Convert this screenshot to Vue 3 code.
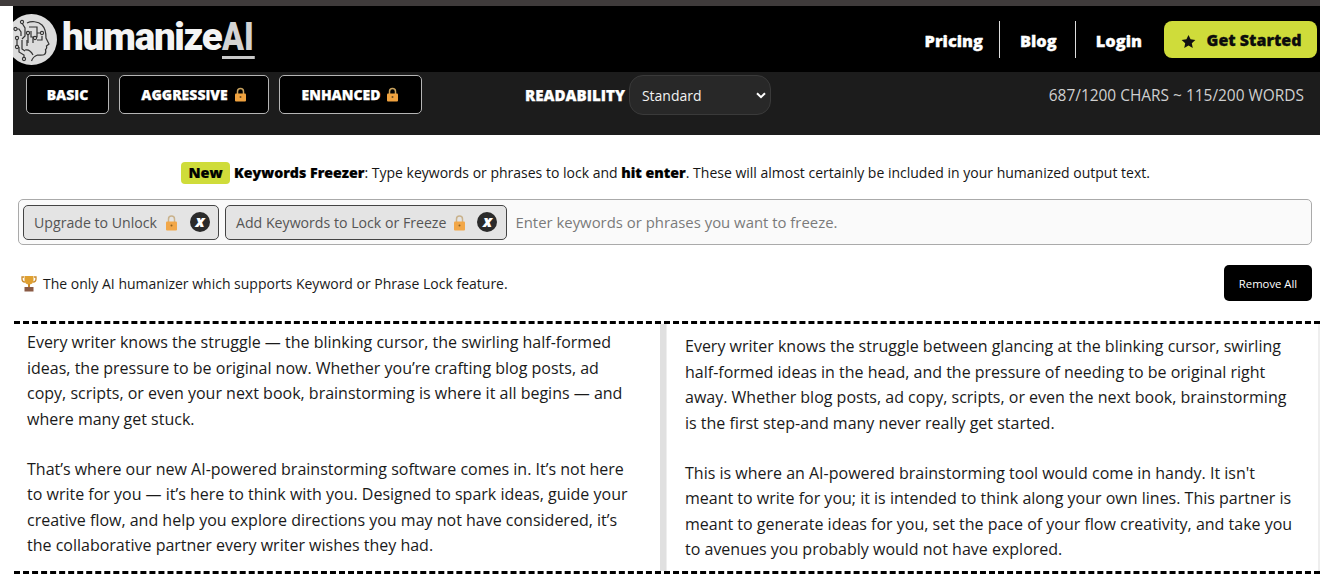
<template>
  <div class="page">
    <div class="topline"></div>
    <div class="shell">
      <header class="nav">
        <div class="brand">
          <svg class="logo" width="44" height="52" viewBox="0 0 44 52">
            <circle cx="18.500" cy="25.500" r="25.500" fill="#dcdcdc" />
            <g fill="none" stroke="#333" stroke-width="1.200">
              <path d="M14 9c4-2 11-2 15 2 4 4 4 9 4 13l3 6-2.500 2c.5 2 0 3-1 3.500.5 2 .5 4-1 5-2 1-5 .5-7 .5-3 1-5 3-6 6" />
              <path d="M12 36c4-1 6 1 8 5" />
              <path d="M16 13h8v6h5M18 17v6h6v-5M20 23v6M24 26h5v-4M15 19v10" />
              <path d="M9 9l3 5v8l-3 3M2 15h4l2 3v4M4 24v9M9 26v9l3 2M6 33v5l5 3v3M14 26v6" />
            </g>
            <g fill="#dcdcdc" stroke="#333" stroke-width="1.100">
              <circle cx="9" cy="8" r="1.600" /><circle cx="2.500" cy="15" r="1.600" /><circle cx="4" cy="24" r="1.600" />
              <circle cx="4" cy="33" r="1.600" /><circle cx="11" cy="45" r="1.600" /><circle cx="29" cy="19" r="1.600" />
              <circle cx="22" cy="24" r="1.600" /><circle cx="15" cy="19" r="1.600" />
            </g>
          </svg>
          <span class="wordmark">humanize<span class="ai">AI</span></span>
        </div>
        <nav class="links">
          <a class="link">Pricing</a>
          <a class="link sep blog">Blog</a>
          <a class="link sep">Login</a>
          <button class="cta">
            <svg width="15" height="15" viewBox="0 0 24 24"><path d="M12 1.500l3.300 7 7.700.9-5.700 5.200 1.500 7.600L12 18.400l-6.800 3.800 1.500-7.600L1 9.400l7.700-.9z" fill="#111" /></svg>
            <span>Get Started</span>
          </button>
        </nav>
      </header>
      <div class="toolbar">
        <div class="modes">
          <button v-for="m in modes" :key="m.label" class="mode" :style="{ width: m.w + 'px' }">
            {{ m.label }}
            <svg v-if="m.lock" class="lock" width="13" height="15" viewBox="0 0 13 15">
              <path d="M3.500 7V4.500a3 3 0 0 1 6 0V7" fill="none" stroke="#c9a25e" stroke-width="1.500" />
              <rect x="1" y="6.500" width="11" height="8" rx="1" fill="#f0a23f" />
              <circle cx="6.500" cy="10" r="1" fill="#6b4a1e" />
            </svg>
          </button>
        </div>
        <div class="readability">
          <span class="rlabel">READABILITY</span>
          <div class="select">
            <span>Standard</span>
            <svg width="10" height="7" viewBox="0 0 10 7"><path d="M1 1.200l4 4 4-4" fill="none" stroke="#fff" stroke-width="2" /></svg>
          </div>
        </div>
        <div class="counts">687/1200 CHARS ~ 115/200 WORDS</div>
      </div>
    </div>

    <p class="notice">
      <span class="new">New</span>
      <strong>Keywords Freezer</strong>: Type keywords or phrases to lock and <strong>hit enter</strong>. These will almost certainly be included in your humanized output text.
    </p>

    <div class="tagbox">
      <div v-for="t in tags" :key="t" class="tag">
        <span>{{ t }}</span>
        <svg class="lock2" width="13" height="17" viewBox="0 0 13 17">
          <path d="M3.500 8V5a3 3 0 0 1 6 0v3" fill="none" stroke="#c9b28c" stroke-width="1.500" />
          <rect x="1" y="7.500" width="11" height="9" rx="1" fill="#f2a748" />
          <circle cx="6.500" cy="11.500" r="1" fill="#8b6226" />
        </svg>
        <span class="close">x</span>
      </div>
      <span class="placeholder">Enter keywords or phrases you want to freeze.</span>
    </div>

    <div class="feature">
      <div class="feature-text">
        <svg width="16" height="17" viewBox="0 0 16 17">
          <path d="M3 2H1v2c0 2 1.500 3 3 3M13 2h2v2c0 2-1.500 3-3 3" fill="none" stroke="#c98a2c" stroke-width="1.300" />
          <path d="M3.500 1h9v4c0 3-2 4.500-4.500 4.500S3.500 8 3.500 5z" fill="#e0a030" />
          <rect x="7" y="9" width="2" height="3" fill="#c98a2c" />
          <rect x="3.500" y="12" width="9" height="4.500" fill="#8a5a44" />
        </svg>
        <span>The only AI humanizer which supports Keyword or Phrase Lock feature.</span>
      </div>
      <button class="remove">Remove All</button>
    </div>

    <section class="editors">
      <div class="pane left">
        <p v-for="p in leftText" :key="p">{{ p }}</p>
      </div>
      <div class="splitter"></div>
      <div class="pane right">
        <p v-for="p in rightText" :key="p">{{ p }}</p>
      </div>
    </section>
  </div>
</template>

<script setup>
const modes = [
  { label: 'BASIC', lock: false, w: 83 },
  { label: 'AGGRESSIVE', lock: true, w: 150 },
  { label: 'ENHANCED', lock: true, w: 143 }
]
const tags = ['Upgrade to Unlock', 'Add Keywords to Lock or Freeze']
const leftText = [
  'Every writer knows the struggle — the blinking cursor, the swirling half-formed ideas, the pressure to be original now. Whether you’re crafting blog posts, ad copy, scripts, or even your next book, brainstorming is where it all begins — and where many get stuck.',
  'That’s where our new AI-powered brainstorming software comes in. It’s not here to write for you — it’s here to think with you. Designed to spark ideas, guide your creative flow, and help you explore directions you may not have considered, it’s the collaborative partner every writer wishes they had.'
]
const rightText = [
  'Every writer knows the struggle between glancing at the blinking cursor, swirling half-formed ideas in the head, and the pressure of needing to be original right away. Whether blog posts, ad copy, scripts, or even the next book, brainstorming is the first step-and many never really get started.',
  'This is where an AI-powered brainstorming tool would come in handy. It isn\'t meant to write for you; it is intended to think along your own lines. This partner is meant to generate ideas for you, set the pace of your flow creativity, and take you to avenues you probably would not have explored.'
]
</script>

<style>
html, body { margin: 0; background: #fff; overflow: hidden; }
</style>

<style scoped>
.page {
  width: 1320px;
  height: 586px;
  overflow: hidden;
  font-family: "Open Sans", "Noto Sans", sans-serif;
  color: #111;
  background: #fff;
}
.topline { height: 6px; background: #3f3b3b; }
.shell { margin-left: 13px; }
.nav {
  height: 66px;
  background: #000;
  display: flex;
  justify-content: space-between;
  align-items: flex-start;
}
.brand { display: flex; align-items: flex-start; height: 66px; padding-top: 8px; box-sizing: border-box; }
.logo { display: block; flex: none; }
.wordmark {
  font-family: Roboto, sans-serif;
  font-weight: 900;
  font-size: 38.500px;
  letter-spacing: -1.300px;
  color: #f4f4f4;
  margin-left: 5px;
  line-height: 46px;
  white-space: nowrap;
}
.ai {
  color: #d4d4d4;
  border-bottom: 3px solid #c9c9c9;
  display: inline-block;
  line-height: 38px;
  letter-spacing: 0;
  padding-right: 1px;
  transform: scaleX(0.84);
  transform-origin: left;
}
.links { display: flex; align-items: center; padding: 15px 3px 0 0; }
.link {
  color: #fff;
  font-weight: 800;
  font-size: 16.400px;
  line-height: 40px;
  height: 37px;
  -webkit-text-stroke: 0.3px #fff;
}
.link.sep { border-left: 1px solid #ddd; margin-left: 16px; padding-left: 20px; }
.link.blog { margin-right: 2px; }
.cta {
  margin-left: 22px;
  width: 153px;
  height: 37px;
  border: none;
  border-radius: 8px;
  background: #cfdc3a;
  display: flex;
  align-items: center;
  justify-content: center;
  gap: 11px;
  font-family: inherit;
  font-weight: 800;
  font-size: 16px;
  color: #0c0c0c;
  padding: 0 0 0 1px;
  -webkit-text-stroke: 0.3px #0c0c0c;
}
.cta svg { margin-top: 3px; }
.toolbar {
  height: 63px;
  box-sizing: border-box;
  background: #1c1c1c;
  display: flex;
  align-items: flex-start;
  padding: 3px 16px 0 13px;
}
.modes { display: flex; gap: 10px; }
.mode {
  height: 39px;
  border: 1px solid #b5b5b5;
  border-radius: 5px;
  background: #000;
  color: #fff;
  font-family: inherit;
  font-weight: 800;
  font-size: 14px;
  display: flex;
  align-items: center;
  justify-content: center;
  gap: 6px;
  padding: 0;
  -webkit-text-stroke: 0.25px #fff;
}
.readability { display: flex; align-items: center; margin-left: 103px; gap: 4px; height: 40px; }
.rlabel { color: #fff; font-weight: 800; font-size: 15.100px; -webkit-text-stroke: 0.25px #fff; }
.select {
  width: 142px;
  height: 40px;
  box-sizing: border-box;
  border: 1px solid #3a3a3a;
  border-radius: 14px;
  background: #282828;
  color: #f2f2f2;
  font-size: 14px;
  display: flex;
  align-items: center;
  justify-content: space-between;
  padding: 0 4px 0 12px;
}
.counts {
  margin-left: auto;
  color: #cfcfcf;
  font-size: 15.450px;
  line-height: 40px;
}
.notice {
  margin: 26px 0 0;
  height: 24px;
  font-size: 14px;
  line-height: 24px;
  text-align: center;
  padding-left: 11px;
  color: #151515;
}
.notice strong { font-weight: 800; color: #000; font-size: 14.200px; -webkit-text-stroke: 0.2px #000; }
.new {
  display: inline-block;
  background: #cfdc3a;
  border-radius: 4px;
  width: 49px;
  height: 22px;
  line-height: 22px;
  font-weight: 800;
  font-size: 14.500px;
  color: #000;
  margin-right: 4px;
  vertical-align: 0;
  -webkit-text-stroke: 0.2px #000;
}
.tagbox {
  margin: 14px 8px 0 18px;
  height: 46px;
  box-sizing: border-box;
  border: 1px solid #aaa;
  border-radius: 5px;
  background: #fafafa;
  display: flex;
  align-items: center;
  gap: 6px;
  padding-left: 4px;
}
.tag {
  height: 35px;
  box-sizing: border-box;
  border: 1px solid #444;
  border-radius: 5px;
  background: #e4e4e4;
  color: #555;
  font-size: 14.150px;
  display: flex;
  align-items: center;
  padding: 0 8px 0 10px;
}
.tag:first-child .lock2 { margin-left: 8px; }
.tag:nth-child(2) { padding-right: 9px; }
.tag:nth-child(2) .close { margin-left: 11px; }
.lock2 { margin-left: 7px; }
.close {
  width: 20px;
  height: 20px;
  border-radius: 50%;
  background: #2b2b2b;
  color: #fff;
  font-weight: 800;
  font-style: italic;
  font-size: 16px;
  line-height: 18px;
  text-align: center;
  margin-left: 12px;
}
.placeholder { color: #7a7a7a; font-size: 14.900px; margin-left: 2px; }
.feature {
  display: flex;
  justify-content: space-between;
  align-items: center;
  margin: 20px 8px 0 21px;
  height: 36px;
}
.feature-text { display: flex; align-items: center; gap: 6px; font-size: 14px; color: #1a1a1a; }
.remove {
  width: 88px;
  height: 36px;
  border: none;
  border-radius: 5px;
  background: #000;
  color: #fff;
  font-family: inherit;
  font-size: 11.300px;
  padding: 0;
}
.editors {
  margin-top: 20px;
  margin-left: 14px;
  height: 253px;
  box-sizing: border-box;
  border-top: 3px dashed #000;
  border-bottom: 3px dashed #000;
  display: flex;
}
.pane {
  font-size: 16px;
  line-height: 25.500px;
  color: #1a1a1a;
  box-sizing: border-box;
}
.pane p { margin: 0 0 24.500px; }
.left { width: 646px; padding: 6px 20px 0 13px; }
.splitter { width: 6px; background: #e0e0e0; }
.right {
  flex: 1;
  padding: 10px 18px 0 18px;
  border-right: 2px solid #eee;
  border-left: 1px solid #eee;
}
</style>
